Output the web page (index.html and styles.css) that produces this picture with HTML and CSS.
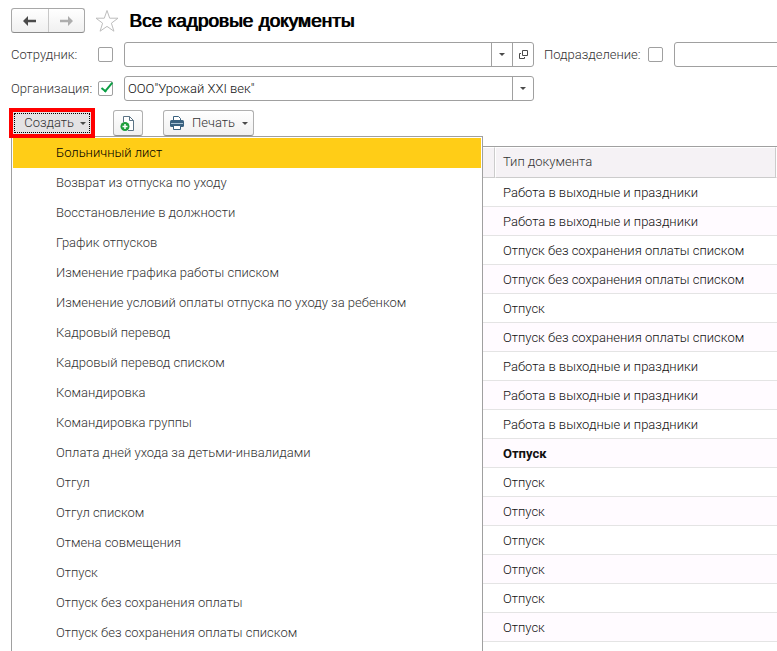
FILE: index.html
```html
<!DOCTYPE html>
<html lang="ru">
<head>
    <meta charset="utf-8">
    <title>Все кадровые документы</title>
    <link rel="stylesheet" href="styles.css">
</head>
<body>
    <header class="header">
        <div class="nav">
            <button type="button" class="nav-btn" aria-label="Назад">
                <svg width="16" height="12" viewBox="0 0 16 12"><path d="M1 6l5-5v3.700h8v2.600H6V11z" fill="#4a4a4a"/></svg>
            </button>
            <button type="button" class="nav-btn" aria-label="Вперед">
                <svg width="16" height="12" viewBox="0 0 16 12"><path d="M15 6l-5-5v3.700H2v2.600h8V11z" fill="#adadad"/></svg>
            </button>
        </div>
        <button type="button" class="star" aria-label="В избранное">
            <svg width="24" height="24" viewBox="0 0 24 24"><path d="M12 1.500l2.700 7.700h8.300l-6.600 5 2.500 8-6.900-4.800-6.900 4.800 2.500-8-6.600-5h8.300z" fill="#fff" stroke="#bdbdbd"/></svg>
        </button>
        <h1 class="title">Все кадровые документы</h1>
    </header>

    <form class="filters">
        <div class="filter-row">
            <label class="label" for="employee">Сотрудник:</label>
            <input type="checkbox" class="check" aria-label="Отбор по сотруднику">
            <div class="combo">
                <input type="text" class="combo-input" id="employee">
                <button type="button" class="combo-btn" aria-label="Выбрать"><span class="arrow"></span></button>
                <button type="button" class="combo-btn" aria-label="Открыть">
                    <svg width="11" height="11" viewBox="0 0 11 11" fill="none" stroke="#4a4a4a"><path d="M4.500 1.500h5v5h-5zM3 4.500H1.500v5h5V8"/></svg>
                </button>
            </div>
            <label class="label-second" for="department">Подразделение:</label>
            <input type="checkbox" class="check" aria-label="Отбор по подразделению">
            <input type="text" class="department" id="department">
        </div>
        <div class="filter-row">
            <label class="label" for="organization">Организация:</label>
            <input type="checkbox" class="check" aria-label="Отбор по организации" checked>
            <div class="combo">
                <select class="combo-select" id="organization">
                    <option>ООО"Урожай XXI век"</option>
                </select>
                <span class="combo-btn"><span class="arrow"></span></span>
            </div>
        </div>
    </form>

    <div class="toolbar">
        <button type="button" class="btn create"><span class="focus">Создать<span class="arrow"></span></span></button>
        <button type="button" class="btn btn-copy" aria-label="Создать новый документ">
            <svg width="18" height="18" viewBox="0 0 18 18">
                <path d="M4.500 8V2.500h6l4 4v10H9" fill="#fff" stroke="#5b7385"/>
                <path d="M10.500 2.500v4h4" fill="none" stroke="#5b7385"/>
                <circle cx="6" cy="12.500" r="4.500" fill="#1f9d3c"/>
                <path d="M6 10v5M3.500 12.500h5" stroke="#fff" stroke-width="1.500"/>
            </svg>
        </button>
        <button type="button" class="btn btn-print">
            <svg width="16" height="16" viewBox="0 0 16 16">
                <path d="M4.500 6V1.500h5l2 2V6" fill="#fff" stroke="#39617f"/>
                <rect x="1" y="5" width="14" height="7" rx="1.500" fill="#39617f"/>
                <path d="M2 8.500h12" stroke="#a9c3d6"/>
                <path d="M4.500 10.500h7v4h-7z" fill="#fff" stroke="#39617f"/>
            </svg>
            Печать<span class="arrow"></span>
        </button>
        <ul class="menu" role="menu">
            <li class="menu-item active" role="menuitem">Больничный лист</li>
            <li class="menu-item" role="menuitem">Возврат из отпуска по уходу</li>
            <li class="menu-item" role="menuitem">Восстановление в должности</li>
            <li class="menu-item" role="menuitem">График отпусков</li>
            <li class="menu-item" role="menuitem">Изменение графика работы списком</li>
            <li class="menu-item" role="menuitem">Изменение условий оплаты отпуска по уходу за ребенком</li>
            <li class="menu-item" role="menuitem">Кадровый перевод</li>
            <li class="menu-item" role="menuitem">Кадровый перевод списком</li>
            <li class="menu-item" role="menuitem">Командировка</li>
            <li class="menu-item" role="menuitem">Командировка группы</li>
            <li class="menu-item" role="menuitem">Оплата дней ухода за детьми-инвалидами</li>
            <li class="menu-item" role="menuitem">Отгул</li>
            <li class="menu-item" role="menuitem">Отгул списком</li>
            <li class="menu-item" role="menuitem">Отмена совмещения</li>
            <li class="menu-item" role="menuitem">Отпуск</li>
            <li class="menu-item" role="menuitem">Отпуск без сохранения оплаты</li>
            <li class="menu-item" role="menuitem">Отпуск без сохранения оплаты списком</li>
        </ul>
    </div>

    <table class="docs">
        <colgroup>
            <col class="col-main">
            <col>
            <col class="col-last">
        </colgroup>
        <thead>
            <tr><th></th><th>Тип документа</th><th></th></tr>
        </thead>
        <tbody>
            <tr><td></td><td>Работа в выходные и праздники</td><td></td></tr>
            <tr><td></td><td>Работа в выходные и праздники</td><td></td></tr>
            <tr><td></td><td>Отпуск без сохранения оплаты списком</td><td></td></tr>
            <tr><td></td><td>Отпуск без сохранения оплаты списком</td><td></td></tr>
            <tr><td></td><td>Отпуск</td><td></td></tr>
            <tr><td></td><td>Отпуск без сохранения оплаты списком</td><td></td></tr>
            <tr><td></td><td>Работа в выходные и праздники</td><td></td></tr>
            <tr><td></td><td>Работа в выходные и праздники</td><td></td></tr>
            <tr><td></td><td>Работа в выходные и праздники</td><td></td></tr>
            <tr class="current"><td></td><td>Отпуск</td><td></td></tr>
            <tr><td></td><td>Отпуск</td><td></td></tr>
            <tr><td></td><td>Отпуск</td><td></td></tr>
            <tr><td></td><td>Отпуск</td><td></td></tr>
            <tr><td></td><td>Отпуск</td><td></td></tr>
            <tr><td></td><td>Отпуск</td><td></td></tr>
            <tr><td></td><td>Отпуск</td><td></td></tr>
        </tbody>
    </table>
</body>
</html>
```

FILE: styles.css
```css
* {
    box-sizing: border-box;
}
body {
    margin: 0;
    padding: 8px 0 0 11px;
    height: 100vh;
    overflow: hidden;
    background: #fff;
    color: #333;
    font: 300 13px/16px Roboto, "Liberation Sans", sans-serif;
}
button, input, select {
    font: inherit;
    color: inherit;
    margin: 0;
    padding: 0;
}
button {
    display: flex;
    align-items: center;
    justify-content: center;
    border: 0;
    background: none;
}
.header {
    display: flex;
    align-items: center;
    height: 25px;
}
.nav {
    display: flex;
    width: 74px;
    height: 25px;
    border: 1px solid #a8a8a8;
    border-bottom-color: #8c8c8c;
    border-radius: 3px;
    background: linear-gradient(#fff, #f0f0f0);
}
.nav-btn {
    flex: 1;
}
.nav-btn + .nav-btn {
    border-left: 1px solid #c8c8c8;
}
.star {
    margin: 0 10px;
}
.title {
    margin: 0;
    color: #000;
    font: 19px/24px "Liberation Sans", Arial, sans-serif;
    text-shadow: 1px 0 #000;
}
.filters {
    display: flex;
    flex-direction: column;
    gap: 9px;
    margin-top: 9px;
}
.filter-row {
    display: flex;
    align-items: center;
    height: 25px;
}
.label {
    flex: 0 0 87px;
}
.label-second {
    margin: 0 7px 0 10px;
}
.check {
    flex: none;
    appearance: none;
    width: 15px;
    height: 15px;
    margin-right: 11px;
    border: 1px solid #a0a0a0;
    border-radius: 2px;
    background: #fff;
}
.check:checked {
    position: relative;
}
.check:checked::after {
    content: "";
    position: absolute;
    left: 5px;
    top: -2px;
    width: 6px;
    height: 12px;
    box-sizing: border-box;
    border: solid #0c9f45;
    border-width: 0 2px 2px 0;
    transform: rotate(40deg);
}
.combo {
    display: flex;
    flex: 0 1 410px;
    height: 25px;
    border: 1px solid #a0a0a0;
    border-radius: 3px;
    color: #111;
}
.combo-input,
.combo-select {
    flex: 1;
    min-width: 0;
    padding-left: 3px;
    border: 0;
    background: none;
    outline: 0;
    appearance: none;
}
.combo-btn {
    display: flex;
    align-items: center;
    justify-content: center;
    width: 21px;
    border-left: 1px solid #a0a0a0;
    pointer-events: none;
}
.arrow {
    border: 3px solid transparent;
    border-top-color: #4a4a4a;
    border-bottom: 0;
}
.department {
    flex: 1;
    min-width: 0;
    height: 25px;
    margin-right: -4px;
    border: 1px solid #a0a0a0;
    border-radius: 3px;
}
.toolbar {
    display: flex;
    position: relative;
    margin-top: 9px;
}
.btn {
    height: 26px;
    border: 1px solid #b0b0b0;
    border-bottom-color: #909090;
    border-radius: 3px;
    background: linear-gradient(#fff, #f0f0f0);
}
.create {
    position: relative;
    z-index: 2;
    width: 82px;
    padding: 2px;
    border-radius: 0;
    background: #e4e2e4;
    outline: 4px solid #f00;
    outline-offset: -2px;
}
.focus {
    display: flex;
    flex: 1;
    align-items: center;
    justify-content: flex-end;
    gap: 6px;
    height: 20px;
    padding-right: 3px;
    border: 1px dotted #000;
}
.btn-copy {
    width: 30px;
    margin: 0 20px;
}
.btn-print {
    width: 91px;
    gap: 7px;
}
.menu {
    position: absolute;
    z-index: 1;
    top: 26px;
    left: 0;
    width: 472px;
    margin: 0;
    padding: 1px 1px 30px;
    border: 1px solid #a0a0a0;
    background: #fff;
    list-style: none;
}
.menu-item {
    padding-left: 43px;
    line-height: 30px;
}
.menu-item.active {
    background: #ffcd17;
    color: #000;
}
.docs {
    width: 100%;
    margin-top: 10px;
    border-top: 1px solid #a0a0a0;
    border-spacing: 0;
    table-layout: fixed;
    color: #111;
}
.col-main {
    width: 484px;
}
.col-last {
    width: 1px;
}
.docs th {
    height: 31px;
    padding: 0 0 2px 7px;
    border: 1px solid #fff;
    border-right-color: #ccc;
    border-bottom-color: #ccc;
    background: #f5f2f5;
    color: #333;
    font-weight: inherit;
    text-align: left;
}
.docs td {
    height: 29px;
    padding: 2px 0 0 8px;
    border-bottom: 1px solid #e4e4e4;
}
.docs th:last-child,
.docs td:last-child {
    padding: 0;
}
.docs tbody tr:nth-child(even) {
    background: #fffbff;
}
.docs .current {
    font-weight: bold;
}
```
